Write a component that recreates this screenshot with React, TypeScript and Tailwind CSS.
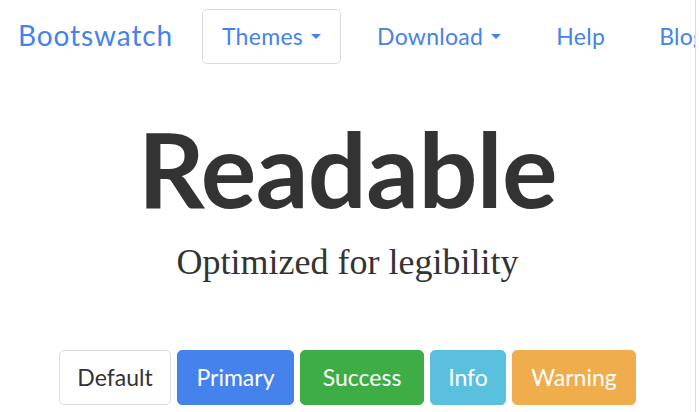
const navLink = 'text-[#4582ec] text-[23px] leading-none flex items-center tracking-[0.3px]';

function Caret() {
	return <span className="ml-[8px] inline-block w-0 h-0 border-x-[5px] border-x-transparent border-t-[5px] border-t-[#4582ec]" />;
}

const buttons = [
	{label: 'Default', cls: 'bg-white text-[#333] border-[#ddd] w-[112px]'},
	{label: 'Primary', cls: 'bg-[#4582ec] text-white border-[#4582ec] w-[117px]'},
	{label: 'Success', cls: 'bg-[#3fad46] text-white border-[#3fad46] w-[124px]'},
	{label: 'Info', cls: 'bg-[#5bc0de] text-white border-[#5bc0de] w-[76px]'},
	{label: 'Warning', cls: 'bg-[#f0ad4e] text-white border-[#f0ad4e] w-[124px]'},
];

export default function App() {
	return (
		<div className="w-[699px] h-[412px] bg-white overflow-hidden">
			<div className="w-[696px] h-full border-r border-[#dcdcdc] overflow-hidden font-['Lato',sans-serif]">
				<nav className="h-[72px] flex items-center whitespace-nowrap">
					<div className="w-[202px] shrink-0 pl-[18px]">
						<a className="text-[#4582ec] text-[28px] leading-none tracking-[0.9px]">Bootswatch</a>
					</div>
					<div className="h-[55px] w-[139px] shrink-0 border border-[#dcdcdc] rounded-[5px] flex items-center justify-center">
						<span className={navLink}>Themes<Caret /></span>
					</div>
					<span className={`${navLink} ml-[36px]`}>Download<Caret /></span>
					<span className={`${navLink} ml-[55px]`}>Help</span>
					<span className={`${navLink} ml-[54px]`}>Blog</span>
				</nav>
				<div className="flex flex-col items-center">
					<h1 className="mt-[44px] text-[104px] font-bold leading-none text-[#333] tracking-[-0.6px]">Readable</h1>
					<p className="mt-[24px] text-[36px] leading-none text-[#333] font-['Liberation_Serif',serif]">Optimized for legibility</p>
					<div className="mt-[70px] flex gap-[6px]">
						{buttons.map(b => (
							<div key={b.label} className={`h-[55px] border rounded-[5px] flex items-center justify-center text-[23px] ${b.cls}`}>
								{b.label}
							</div>
						))}
					</div>
				</div>
			</div>
		</div>
	);
}
